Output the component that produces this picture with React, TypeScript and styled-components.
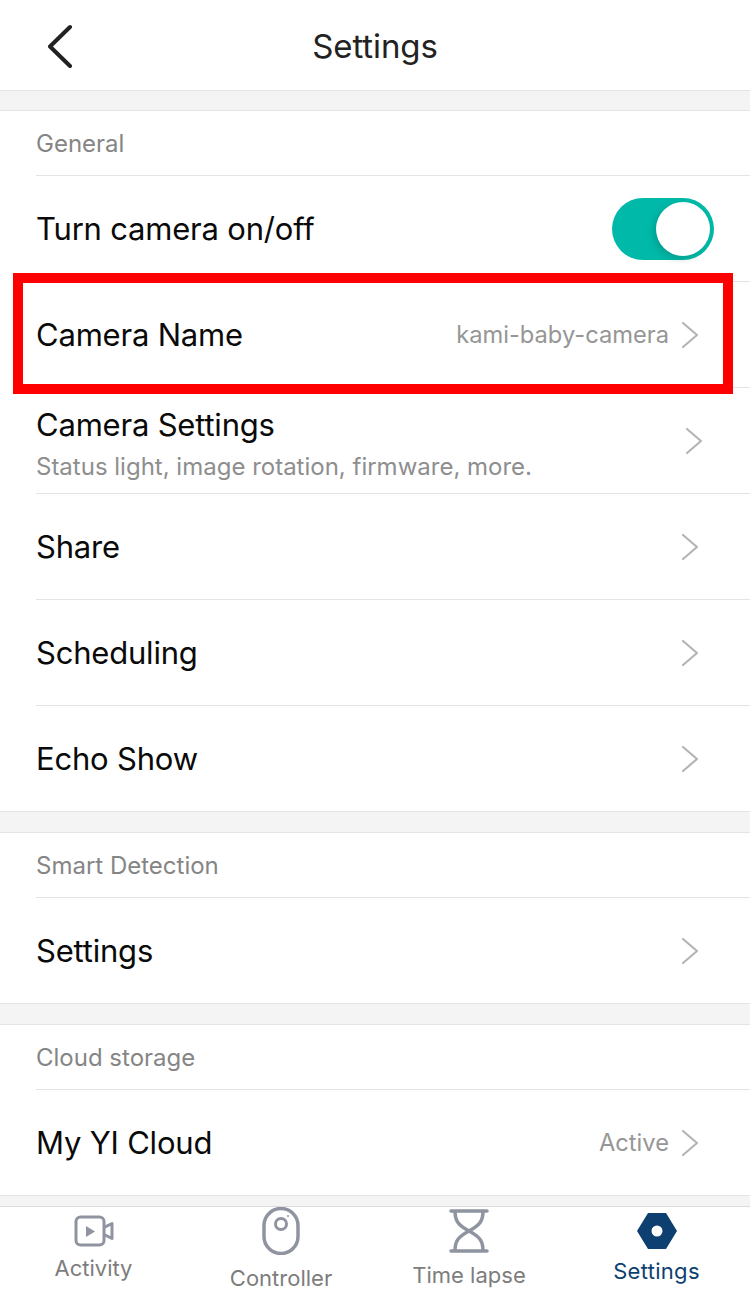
import styled, { createGlobalStyle } from 'styled-components'

const GlobalStyle = createGlobalStyle`
  html, body {
    margin: 0;
    padding: 0;
    background: #fff;
    font-family: Inter, "Noto Sans", "Liberation Sans", sans-serif;
  }
`

const Page = styled.div`
  width: 750px;
  height: 1296px;
  display: flex;
  flex-direction: column;
  overflow: hidden;
  background: #f4f4f4;
`

const Header = styled.header`
  height: 90px;
  flex: 0 0 auto;
  display: flex;
  align-items: center;
  justify-content: center;
  background: #fff;
  border-bottom: 1px solid #e4e4e4;
  position: relative;
`

const BackButton = styled.svg`
  position: absolute;
  left: 46px;
  top: 24px;
`

const Title = styled.h1`
  margin: 0;
  padding-top: 2px;
  font-size: 33px;
  font-weight: 400;
  letter-spacing: -0.1px;
  color: #222;
`

const Section = styled.section<{ $gap: number }>`
  flex: 0 0 auto;
  margin-top: ${({ $gap }) => $gap}px;
  padding-left: 36px;
  background: #fff;
  border-top: 1px solid #e4e4e4;
  border-bottom: 1px solid #e4e4e4;
`

const SectionLabel = styled.div`
  height: 64px;
  display: flex;
  align-items: center;
  font-size: 24px;
  color: #858585;
`

const Row = styled.div<{ $highlighted?: boolean }>`
  height: 105px;
  padding-right: 36px;
  display: flex;
  align-items: center;
  justify-content: space-between;
  border-top: 1px solid #e4e4e4;
  position: relative;

  ${({ $highlighted }) =>
    $highlighted &&
    `
    &::after {
      content: '';
      position: absolute;
      z-index: 1;
      left: -23px;
      top: -9px;
      width: 700px;
      height: 101px;
      border: 10px solid #ff0000;
      pointer-events: none;
    }
  `}
`

const RowText = styled.div`
  display: flex;
  flex-direction: column;
  gap: 9px;
  padding-top: 6px;
`

const RowTitle = styled.div`
  font-size: 31px;
  line-height: 38px;
  letter-spacing: -0.2px;
  color: #0a0a0a;
`

const RowSubtitle = styled.div`
  font-size: 24px;
  line-height: 28px;
  color: #8e8e8e;
`

const RowEnd = styled.div`
  display: flex;
  align-items: center;
  gap: 12px;
`

const RowValue = styled.span`
  font-size: 23.7px;
  color: #969696;
`

const ChevronIcon = styled.svg<{ $inset: number }>`
  display: block;
  flex: 0 0 auto;
  margin-right: ${({ $inset }) => $inset}px;
`

const Toggle = styled.div`
  width: 102px;
  height: 62px;
  border-radius: 31px;
  background: #00b9a8;
  display: flex;
  align-items: center;
  justify-content: flex-end;
  padding-right: 4px;
  box-sizing: border-box;
`

const ToggleKnob = styled.div`
  width: 54px;
  height: 54px;
  border-radius: 50%;
  background: #fff;
  box-shadow: -3px 3px 6px rgba(0, 90, 80, 0.25);
`

const TabBar = styled.nav`
  margin-top: 10px;
  flex: 1 1 auto;
  display: grid;
  grid-template-columns: 187px 188px 188px 187px;
  background: #fff;
  border-top: 1px solid #dcdcdc;
`

const Tab = styled.div<{ $labelGap: number; $iconTop: number }>`
  display: flex;
  flex-direction: column;
  align-items: center;
  padding-top: ${({ $iconTop }) => $iconTop}px;

  svg {
    display: block;
    margin-bottom: ${({ $labelGap }) => $labelGap}px;
  }
`

const TabLabel = styled.span<{ $active?: boolean }>`
  font-size: 22px;
  line-height: 26px;
  letter-spacing: ${({ $active }) => ($active ? '0.3px' : '0')};
  color: ${({ $active }) => ($active ? '#0d3f70' : '#7d7d7d')};
`

const Chevron = ({ inset = 15 }: { inset?: number }) => (
  <ChevronIcon $inset={inset} width="18" height="28" viewBox="0 0 18 28" fill="none">
    <path d="M2 2l14 12L2 26" stroke="#b4b4b4" strokeWidth="2.2" strokeLinecap="round" strokeLinejoin="round" />
  </ChevronIcon>
)

export default function App() {
  return (
    <>
      <GlobalStyle />
      <Page>
        <Header>
          <BackButton width="30" height="44" viewBox="0 0 30 44" fill="none">
            <path d="M24 3L4 22.5 24 42" stroke="#222" strokeWidth="4" strokeLinecap="round" strokeLinejoin="round" />
          </BackButton>
          <Title>Settings</Title>
        </Header>

        <Section $gap={19}>
          <SectionLabel>General</SectionLabel>
          <Row>
            <RowTitle>Turn camera on/off</RowTitle>
            <Toggle>
              <ToggleKnob />
            </Toggle>
          </Row>
          <Row $highlighted>
            <RowTitle>Camera Name</RowTitle>
            <RowEnd>
              <RowValue>kami-baby-camera</RowValue>
              <Chevron />
            </RowEnd>
          </Row>
          <Row>
            <RowText>
              <RowTitle>Camera Settings</RowTitle>
              <RowSubtitle>Status light, image rotation, firmware, more.</RowSubtitle>
            </RowText>
            <Chevron inset={11} />
          </Row>
          <Row>
            <RowTitle>Share</RowTitle>
            <Chevron />
          </Row>
          <Row>
            <RowTitle>Scheduling</RowTitle>
            <Chevron />
          </Row>
          <Row>
            <RowTitle>Echo Show</RowTitle>
            <Chevron />
          </Row>
        </Section>

        <Section $gap={20}>
          <SectionLabel>Smart Detection</SectionLabel>
          <Row>
            <RowTitle>Settings</RowTitle>
            <Chevron />
          </Row>
        </Section>

        <Section $gap={20}>
          <SectionLabel>Cloud storage</SectionLabel>
          <Row>
            <RowTitle>My YI Cloud</RowTitle>
            <RowEnd>
              <RowValue>Active</RowValue>
              <Chevron />
            </RowEnd>
          </Row>
        </Section>

        <TabBar>
          <Tab $iconTop={8} $labelGap={8}>
            <svg width="40" height="32" viewBox="0 0 40 32" fill="none">
              <rect x="2" y="2" width="28" height="28" rx="4.500" stroke="#8f94a0" strokeWidth="3" />
              <path d="M30 12.500l8-4v15l-8-4" stroke="#8f94a0" strokeWidth="3" strokeLinejoin="round" />
              <path d="M12 11l9 5.500-9 5.500z" fill="#8f94a0" />
            </svg>
            <TabLabel>Activity</TabLabel>
          </Tab>
          <Tab $iconTop={0} $labelGap={10}>
            <svg width="38" height="48" viewBox="0 0 38 48" fill="none">
              <rect x="2" y="1.500" width="34" height="45" rx="17" stroke="#8f94a0" strokeWidth="3.500" />
              <circle cx="19" cy="17" r="5.500" stroke="#8f94a0" strokeWidth="3" />
              <circle cx="26" cy="9" r="1" fill="#8f94a0" />
            </svg>
            <TabLabel>Controller</TabLabel>
          </Tab>
          <Tab $iconTop={2} $labelGap={9}>
            <svg width="40" height="44" viewBox="0 0 40 44" fill="none">
              <path d="M2 2h36M2 42h36" stroke="#8f94a0" strokeWidth="3.500" strokeLinecap="round" />
              <path d="M6 2c0 10 3 14 14 20 11 6 14 10 14 20M34 2c0 10-3 14-14 20C9 28 6 32 6 42" stroke="#8f94a0" strokeWidth="3.500" />
            </svg>
            <TabLabel>Time lapse</TabLabel>
          </Tab>
          <Tab $iconTop={6} $labelGap={9}>
            <svg width="40" height="36" viewBox="0 0 40 36" fill="none">
              <path fillRule="evenodd" clipRule="evenodd" d="M11 0h18l11 18-11 18H11L0 18 11 0zm9 12.500a5.500 5.500 0 100 11 5.500 5.500 0 000-11z" fill="#0d3f70" />
            </svg>
            <TabLabel $active>Settings</TabLabel>
          </Tab>
        </TabBar>
      </Page>
    </>
  )
}
